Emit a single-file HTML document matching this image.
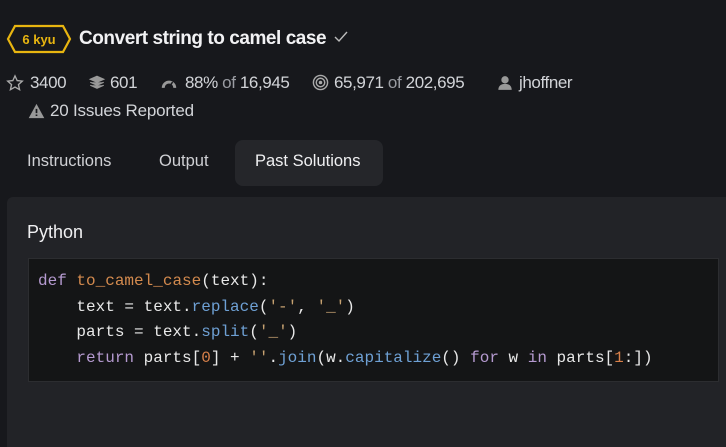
<!DOCTYPE html>
<html><head><meta charset="utf-8"><style>
body{margin:0;width:726px;height:435px;background:#17181c;font-family:"Liberation Sans",sans-serif;color:#d8d9dc;overflow:hidden;position:relative}
.a{position:absolute;white-space:nowrap}
.t{font-size:19px;font-weight:bold;color:#f2f2f4;letter-spacing:-0.45px}
.s{font-size:17px;color:#d2d4d8;letter-spacing:-0.4px}
.g{color:#9a9ca2}
.tab{font-size:16.5px;color:#cfd0d4}
.code{font-family:"Liberation Mono",monospace;font-size:16px;line-height:25.5px;color:#e8e8e8;white-space:pre}
.k{color:#b59ad0}.f{color:#d38a4e}.m{color:#6ea0d4}.n{color:#d8804a}.st{color:#c7a271}
</style></head><body>
<svg class="a" style="left:6px;top:24px" width="66" height="30" viewBox="0 0 66 30"><path d="M9 2H57L64 15L57 28H9L2 15Z" fill="none" stroke="#e8b510" stroke-width="2.2"/><text x="33" y="20" text-anchor="middle" font-family="Liberation Sans" font-size="13" font-weight="bold" fill="#e8b510">6 kyu</text></svg>
<div class="a t" style="left:79px;top:28px">Convert string to camel case</div>
<svg class="a" style="left:334px;top:31px" width="14" height="12" viewBox="0 0 14 12"><path d="M1 6l4 4 8-9" fill="none" stroke="#bbb" stroke-width="1.4"/></svg>
<svg class="a" style="left:6px;top:74px" width="18" height="18" viewBox="0 0 24 24"><path d="M12 2.5l2.9 6.3 6.8.7-5.1 4.6 1.5 6.8L12 17.4l-6.1 3.5 1.5-6.8L2.3 9.5l6.8-.7z" fill="none" stroke="#aaa" stroke-width="1.8"/></svg>
<div class="a s" style="left:30px;top:73px">3400</div>
<svg class="a" style="left:88px;top:74px" width="18" height="18" viewBox="0 0 24 24"><path d="M12 3l9 4-9 4-9-4z M3 11l9 4 9-4 M3 15l9 4 9-4" fill="#999" stroke="#999" stroke-width="1.6"/></svg>
<div class="a s" style="left:110px;top:73px">601</div>
<svg class="a" style="left:160px;top:77px" width="18" height="13" viewBox="0 0 24 18"><path d="M2 15a10 10 0 0 1 20 0h-4a6 6 0 0 0-12 0z" fill="#999"/><path d="M12 14l5-7" stroke="#17181c" stroke-width="2"/></svg>
<div class="a s" style="left:185px;top:73px">88%<span class="g"> of </span>16,945</div>
<svg class="a" style="left:312px;top:74px" width="17" height="17" viewBox="0 0 24 24"><circle cx="12" cy="12" r="10" fill="none" stroke="#aaa" stroke-width="2"/><circle cx="12" cy="12" r="6" fill="none" stroke="#aaa" stroke-width="2"/><circle cx="12" cy="12" r="2.5" fill="#aaa"/></svg>
<div class="a s" style="left:334px;top:73px">65,971<span class="g"> of </span>202,695</div>
<svg class="a" style="left:497px;top:74px" width="16" height="17" viewBox="0 0 24 24"><circle cx="12" cy="8" r="5.5" fill="#999"/><path d="M2 23c0-6 4-9 10-9s10 3 10 9z" fill="#999"/></svg>
<div class="a s" style="left:519px;top:73px">jhoffner</div>
<svg class="a" style="left:28px;top:103px" width="17" height="16" viewBox="0 0 24 22"><path d="M12 1L23 21H1z" fill="#999"/><path d="M12 8v6M12 16v2" stroke="#17181c" stroke-width="2.4"/></svg>
<div class="a s" style="left:50px;top:101px;letter-spacing:-0.2px">20 Issues Reported</div>
<div class="a" style="left:235px;top:140px;width:148px;height:46px;background:#25262a;border-radius:8px"></div>
<div class="a tab" style="left:27px;top:152px">Instructions</div>
<div class="a tab" style="left:159px;top:152px">Output</div>
<div class="a tab" style="left:255px;top:152px;color:#f0f0f2">Past Solutions</div>
<div class="a" style="left:7px;top:197px;width:730px;height:250px;background:#222327;border-radius:6px 0 0 0"></div>
<div class="a" style="left:27px;top:222px;font-size:18px;color:#f0f0f2">Python</div>
<div class="a" style="left:28px;top:258px;width:689px;height:122px;background:#141516;border:1px solid #2c2d30"></div>
<div class="a code" style="left:38px;top:269px"><div><span class="k">def</span> <span class="f">to_camel_case</span>(text):</div><div>    text = text.<span class="m">replace</span>(<span class="st">'-'</span>, <span class="st">'_'</span>)</div><div>    parts = text.<span class="m">split</span>(<span class="st">'_'</span>)</div><div>    <span class="k">return</span> parts[<span class="n">0</span>] + <span class="st">''</span>.<span class="m">join</span>(w.<span class="m">capitalize</span>() <span class="k">for</span> w <span class="k">in</span> parts[<span class="n">1</span>:])</div></div>
</body></html>
